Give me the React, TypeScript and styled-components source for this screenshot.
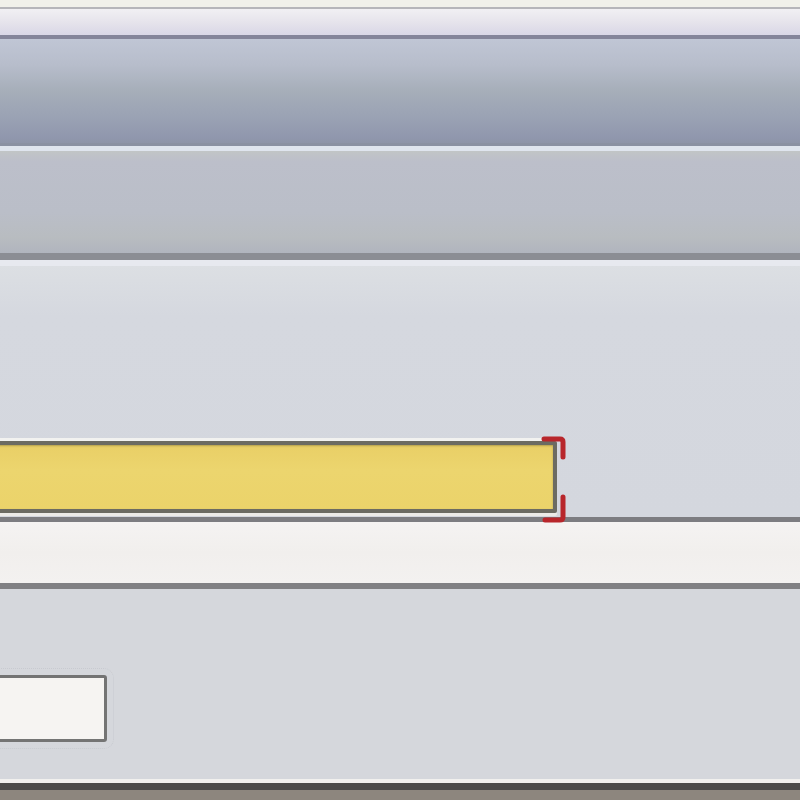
import React from "react";
import styled, { createGlobalStyle } from "styled-components";

const Global = createGlobalStyle`
  html, body { margin: 0; padding: 0; background: #d5d7dc; overflow: hidden; }
  body { font-family: "Liberation Sans", Arial, sans-serif; }
`;

const Window = styled.div`
  width: 800px;
  height: 800px;
  display: flex;
  flex-direction: column;
  overflow: hidden;
  & > * { flex-shrink: 0; }
`;

const TopStrip = styled.div`
  height: 7px;
  background: #f1f1ea;
  border-bottom: 2px solid #b6b6ba;
`;

const TitleBand = styled.div`
  height: 26px;
  background: linear-gradient(#f1f0f3, #e6e4ec 50%, #d9d7e6);
  border-bottom: 4px solid #84859a;
`;

const Toolbar = styled.div`
  height: 104px;
  background: linear-gradient(
    #c0c6d5 0%,
    #b7bdcb 25%,
    #a6aeb9 50%,
    #9aa2b4 75%,
    #9097ad 95%,
    #8d94a8 100%
  );
  border-bottom: 3px solid #8a91a2;
`;

const Ribbon = styled.div`
  height: 102px;
  background: linear-gradient(#c1c5c6 0%, #bcbfca 10%, #babec8 60%, #b8bcc0 85%, #b0b4be 100%);
  border-top: 5px solid #dfe5ee;
  border-bottom: 7px solid #8b8d94;
`;

const Content = styled.div`
  height: 262px;
  box-sizing: border-box;
  background: linear-gradient(#dcdfe3, #d5d8df 20%, #d4d7de);
  border-top: 6px solid #e7e9ef;
  border-bottom: 5px solid #7d7d81;
  padding-top: 175px;
`;

const ProgressTrack = styled.div`
  position: relative;
  margin-left: -10px;
  width: 559px;
  height: 64px;
  border: 4px solid #6c6b62;
  border-radius: 2px;
  background: linear-gradient(#e9cf66, #ecd56e 40%, #ebd36a);
  box-shadow: 0 -3px 0 #f2f2f0, 0 3px 0 #ecebe8, inset 0 1px 2px rgba(80, 70, 30, 0.35);
`;

const FocusBrackets = styled.svg`
  position: absolute;
  right: -15px;
  top: -9px;
  width: 26px;
  height: 88px;
  overflow: visible;
`;

const StatusStrip = styled.div`
  height: 61px;
  background: linear-gradient(#f5f3f2, #f1efed 50%, #f3f1f0);
  border-bottom: 6px solid #808083;
`;

const BottomPanel = styled.div`
  height: 194px;
  box-sizing: border-box;
  background: #d5d7dc;
  padding-top: 86px;
  border-bottom: 4px solid #f1f0ee;
`;

const TextField = styled.input`
  display: block;
  margin-left: -10px;
  width: 117px;
  height: 67px;
  box-sizing: border-box;
  border: 3px solid #747474;
  border-radius: 3px;
  background: #f6f4f2;
  outline: 1px dotted #c8cad0;
  outline-offset: 6px;
  font: 14px "Liberation Sans", Arial, sans-serif;
`;

const BaseLine = styled.div`
  height: 7px;
  background: #4c4b4a;
`;

const Floor = styled.div`
  height: 10px;
  background: #8d867e;
`;

export default function App() {
  return (
    <>
      <Global />
      <Window>
        <TopStrip />
        <TitleBand />
        <Toolbar />
        <Ribbon />
        <Content>
          <ProgressTrack>
            <FocusBrackets viewBox="0 0 26 88">
              <path
                d="M2 3 H18 Q21 3 21 6 V21"
                fill="none"
                stroke="#b8262b"
                strokeWidth="5"
                strokeLinecap="round"
              />
              <path
                d="M21 61 V81 Q21 84 18 84 H3"
                fill="none"
                stroke="#b8262b"
                strokeWidth="5"
                strokeLinecap="round"
              />
            </FocusBrackets>
          </ProgressTrack>
        </Content>
        <StatusStrip />
        <BottomPanel>
          <TextField aria-label="value" />
        </BottomPanel>
        <BaseLine />
        <Floor />
      </Window>
    </>
  );
}
